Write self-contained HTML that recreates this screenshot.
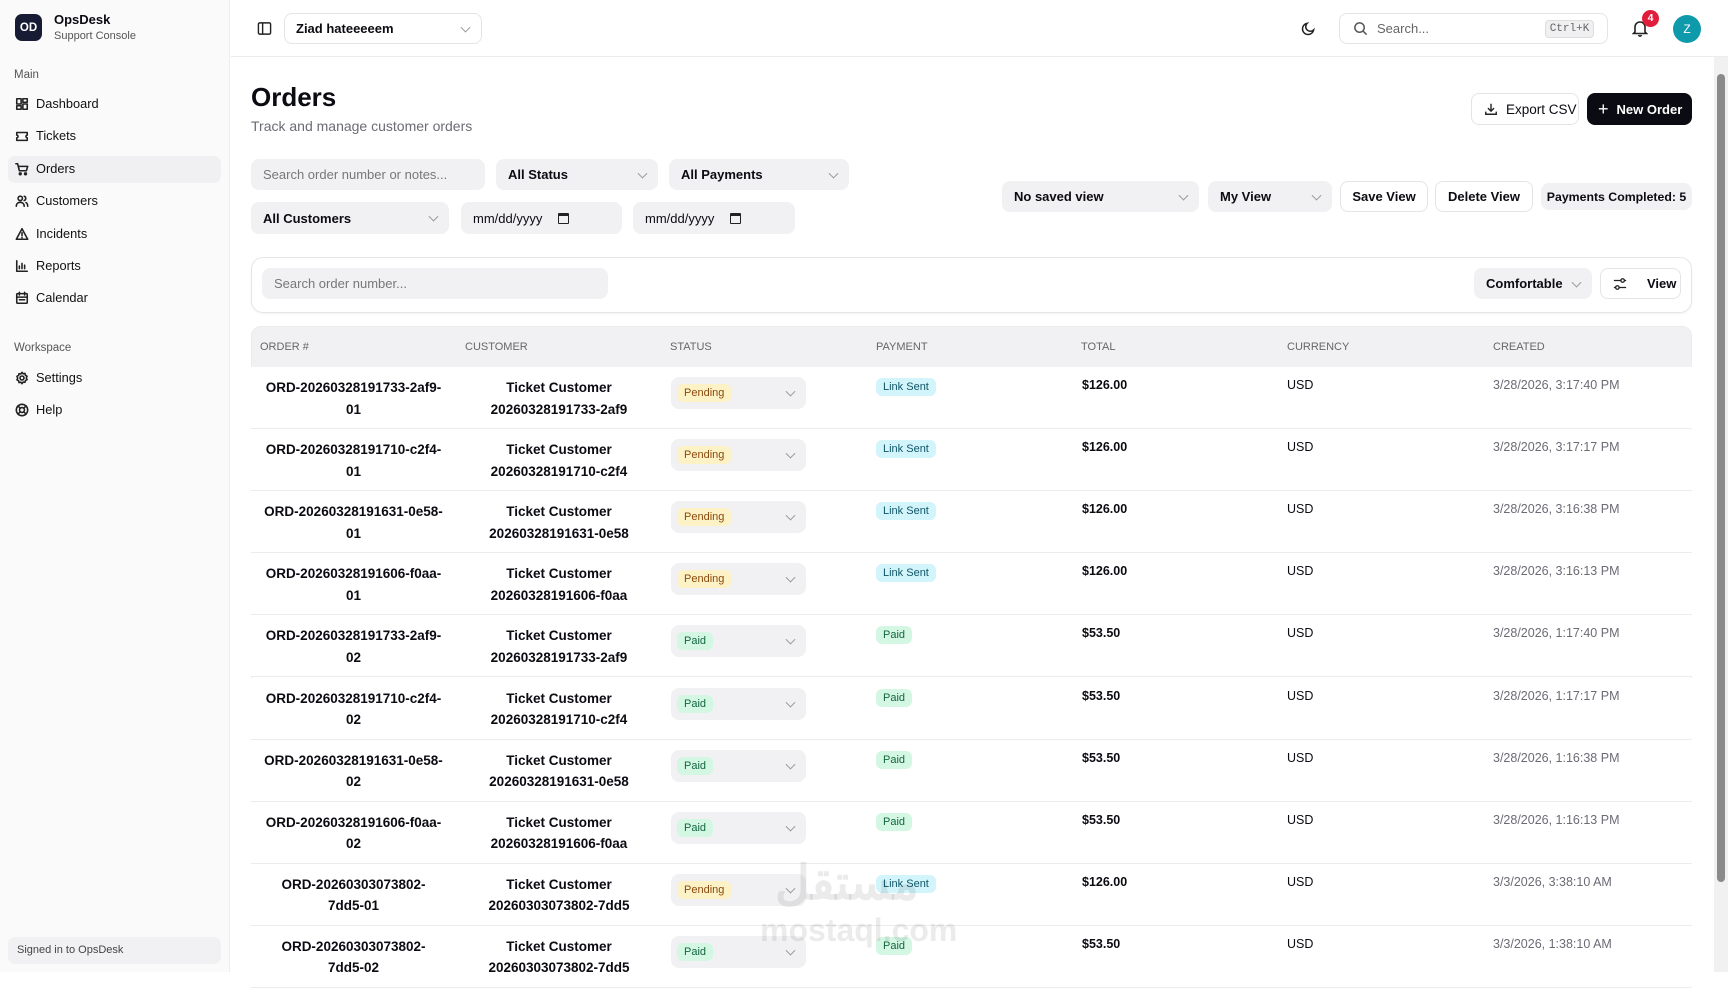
<!DOCTYPE html>
<html><head><meta charset="utf-8"><style>
*{box-sizing:border-box;margin:0;padding:0}
body{width:1728px;height:972px;overflow:hidden;font-family:"Liberation Sans",sans-serif;background:#fff;color:#0b0b12;position:relative;font-size:14px}
.abs{position:absolute}
.sb{left:0;top:0;width:230px;height:972px;background:#fafafa;border-right:1px solid #eee}
.nav{position:absolute;left:15px;font-size:12.8px;color:#111;display:flex;align-items:center;gap:7px}
.nav svg{width:14px;height:14px;fill:none;stroke:#222;stroke-width:1.8;stroke-linecap:round;stroke-linejoin:round}
.sec{position:absolute;left:14px;font-size:11.5px;color:#555}
.box{position:absolute;border-radius:8px;display:flex;align-items:center;font-size:13px}
.gray{background:#f1f1f3}
.out{background:#fff;border:1px solid #e4e4e7}
.chev{position:absolute;right:12px;top:50%;width:7px;height:7px;border-right:1.3px solid #999;border-bottom:1.3px solid #999;transform:translateY(-70%) rotate(45deg)}
.b{font-weight:bold}
.th{position:absolute;top:326px;height:41px;font-size:11px;color:#666;display:flex;align-items:center}
.row{position:absolute;left:251px;width:1441px;height:62px;border-bottom:1.5px solid #ececee;background:#fff}
.c{position:absolute;font-size:13.5px}
.badge{display:inline-block;border-radius:6px;font-size:11px;padding:3px 7px}
.pend{background:#fdf1c6;color:#8a4a0c}
.paid{background:#d3f7e3;color:#14663d}
.link{background:#d2f4fb;color:#0f5566}
</style></head><body>
<div class="abs sb"></div>
<div class="abs" style="left:15px;top:14px;width:27px;height:27px;border-radius:7px;background:#171b34;color:#fff;font-weight:bold;font-size:11.5px;display:flex;align-items:center;justify-content:center">OD</div>
<div class="abs b" style="left:54px;top:12px;font-size:13px">OpsDesk</div>
<div class="abs" style="left:54px;top:30px;font-size:11px;color:#555">Support Console</div>
<div class="sec" style="top:69px">Main</div>
<div class="abs" style="left:8px;top:156px;width:213px;height:27px;background:#f0f0f2;border-radius:7px"></div>
<div class="nav" style="top:96px"><svg viewBox="0 0 16 16"><rect x="2" y="2" width="5" height="6"/><rect x="9" y="2" width="5" height="4"/><rect x="2" y="10" width="5" height="4"/><rect x="9" y="8" width="5" height="6"/></svg>Dashboard</div>
<div class="nav" style="top:128px"><svg viewBox="0 0 16 16"><path d="M2 4h12v3a1.5 1.5 0 0 0 0 3v3H2v-3a1.5 1.5 0 0 0 0-3z"/></svg>Tickets</div>
<div class="nav" style="top:161px"><svg viewBox="0 0 16 16"><path d="M1 2h2l2 8h8l1.5-5H4"/><circle cx="6" cy="13.5" r="1"/><circle cx="12" cy="13.5" r="1"/></svg>Orders</div>
<div class="nav" style="top:193px"><svg viewBox="0 0 16 16"><circle cx="6" cy="5" r="2.5"/><path d="M1.5 14c0-3 2-4.5 4.5-4.5s4.5 1.5 4.5 4.5M10.5 2.6a2.5 2.5 0 0 1 0 4.8M12.5 9.8c1.3.6 2 2 2 4.2"/></svg>Customers</div>
<div class="nav" style="top:226px"><svg viewBox="0 0 16 16"><path d="M8 2L1.5 14h13z M8 6.5v3.5M8 12v.3"/></svg>Incidents</div>
<div class="nav" style="top:258px"><svg viewBox="0 0 16 16"><path d="M2 2v12h12M5 11V8M8 11V5M11 11V7"/></svg>Reports</div>
<div class="nav" style="top:290px"><svg viewBox="0 0 16 16"><rect x="2" y="3" width="12" height="11" rx="1"/><path d="M2 7h12M5 1.5v3M11 1.5v3M5 10h6"/></svg>Calendar</div>
<div class="sec" style="top:342px">Workspace</div>
<div class="nav" style="top:370px"><svg viewBox="0 0 16 16"><circle cx="8" cy="8" r="2.3"/><path d="M8 1.5l1.3 1.7 2.1-.4.5 2.1 1.9 1-.9 2 .9 2-1.9 1-.5 2.1-2.1-.4L8 14.5l-1.3-1.7-2.1.4-.5-2.1-1.9-1 .9-2-.9-2 1.9-1 .5-2.1 2.1.4z"/></svg>Settings</div>
<div class="nav" style="top:402px"><svg viewBox="0 0 16 16"><circle cx="8" cy="8" r="6.5"/><circle cx="8" cy="8" r="2.8"/><path d="M3.4 3.4l2.6 2.6M12.6 3.4L10 6M3.4 12.6L6 10M12.6 12.6L10 10"/></svg>Help</div>
<div class="abs" style="left:8px;top:937px;width:213px;height:27px;background:#f1f1f3;border-radius:7px;font-size:11px;color:#444;padding:7px 9px">Signed in to OpsDesk</div>

<!-- header -->
<div class="abs" style="left:231px;top:56px;width:1497px;height:1px;background:#ececee"></div>
<svg class="abs" style="left:257px;top:21px" width="15" height="15" viewBox="0 0 16 16" fill="none" stroke="#222" stroke-width="1.5"><rect x="1.5" y="2" width="13" height="12" rx="1.5"/><path d="M6 2v12"/></svg>
<div class="box out b" style="left:284px;top:13px;width:198px;height:31px;padding-left:11px">Ziad hateeeeem<span class="chev"></span></div>
<svg class="abs" style="left:1301px;top:21px" width="15" height="15" viewBox="0 0 16 16" fill="none" stroke="#222" stroke-width="1.6"><path d="M13.5 9.5A6 6 0 1 1 6.5 2.5a4.7 4.7 0 0 0 7 7z"/></svg>
<div class="box out" style="left:1339px;top:13px;width:269px;height:31px;padding-left:37px;color:#666">Search...</div>
<svg class="abs" style="left:1353px;top:21px" width="15" height="15" viewBox="0 0 16 16" fill="none" stroke="#555" stroke-width="1.6"><circle cx="7" cy="7" r="5"/><path d="M11 11l3.5 3.5"/></svg>
<div class="abs" style="left:1545px;top:20px;width:49px;height:18px;background:#f0f0f2;border:1px solid #ddd;border-radius:4px;font-family:'Liberation Mono',monospace;font-size:11px;color:#666;text-align:center;line-height:16px">Ctrl+K</div>
<svg class="abs" style="left:1632px;top:20px" width="16" height="17" viewBox="0 0 16 17" fill="none" stroke="#222" stroke-width="1.6"><path d="M3 12V7a5 5 0 0 1 10 0v5l1.5 1.5h-13zM6.5 15a1.6 1.6 0 0 0 3 0"/></svg>
<div class="abs" style="left:1642px;top:10px;width:17px;height:17px;border-radius:50%;background:#e11d3c;color:#fff;font-size:10.5px;font-weight:bold;text-align:center;line-height:17px">4</div>
<div class="abs" style="left:1673px;top:15px;width:28px;height:28px;border-radius:50%;background:#0e9aab;color:#fff;font-size:12px;text-align:center;line-height:28px">Z</div>

<!-- title -->
<div class="abs b" style="left:251px;top:82px;font-size:26px">Orders</div>
<div class="abs" style="left:251px;top:118px;font-size:14px;color:#6b6b75">Track and manage customer orders</div>
<div class="box out" style="left:1471px;top:93px;width:108px;height:32px;padding-left:12px;gap:8px;font-size:13.5px"><svg width="14" height="14" viewBox="0 0 16 16" fill="none" stroke="#222" stroke-width="1.6"><path d="M8 2v8M4.5 7L8 10.5 11.5 7M2 11v3h12v-3"/></svg>Export CSV</div>
<div class="box b" style="left:1587px;top:93px;width:105px;height:32px;background:#0b0b14;color:#fff;padding-left:11px;gap:8px;font-size:13px"><span style="font-size:18px;font-weight:normal">+</span>New Order</div>

<!-- filters -->
<div class="box gray" style="left:251px;top:159px;width:234px;height:31px;padding-left:12px;color:#777">Search order number or notes...</div>
<div class="box gray b" style="left:496px;top:159px;width:162px;height:31px;padding-left:12px">All Status<span class="chev"></span></div>
<div class="box gray b" style="left:669px;top:159px;width:180px;height:31px;padding-left:12px">All Payments<span class="chev"></span></div>
<div class="box gray b" style="left:251px;top:202px;width:198px;height:32px;padding-left:12px">All Customers<span class="chev"></span></div>
<div class="box gray" style="left:461px;top:202px;width:161px;height:32px;padding-left:12px;gap:16px">mm/dd/yyyy <span style="display:inline-block;width:11px;height:11px;border:1.5px solid #222;border-top-width:3px;border-radius:1px"></span></div>
<div class="box gray" style="left:633px;top:202px;width:162px;height:32px;padding-left:12px;gap:16px">mm/dd/yyyy <span style="display:inline-block;width:11px;height:11px;border:1.5px solid #222;border-top-width:3px;border-radius:1px"></span></div>
<div class="box gray b" style="left:1002px;top:181px;width:197px;height:31px;padding-left:12px">No saved view<span class="chev"></span></div>
<div class="box gray b" style="left:1208px;top:181px;width:124px;height:31px;padding-left:12px">My View<span class="chev"></span></div>
<div class="box out b" style="left:1340px;top:181px;width:88px;height:31px;justify-content:center">Save View</div>
<div class="box out b" style="left:1435px;top:181px;width:98px;height:31px;justify-content:center">Delete View</div>
<div class="box gray b" style="left:1541px;top:183px;width:151px;height:27px;justify-content:center;font-size:12.3px">Payments Completed: 5</div>

<!-- toolbar card -->
<div class="abs" style="left:251px;top:257px;width:1441px;height:56px;border:1.5px solid #e6e6e9;border-radius:12px;box-shadow:0 1px 2px rgba(0,0,0,.05)"></div>
<div class="box gray" style="left:262px;top:268px;width:346px;height:31px;padding-left:12px;color:#777">Search order number...</div>
<div class="box gray b" style="left:1474px;top:268px;width:118px;height:31px;padding-left:12px">Comfortable<span class="chev"></span></div>
<div class="box out b" style="left:1600px;top:268px;width:81px;height:31px;padding-left:12px;gap:20px"><svg width="14" height="14" viewBox="0 0 16 16" fill="none" stroke="#222" stroke-width="1.5"><path d="M1 4h8M13 4h2M1 12h2M7 12h8"/><circle cx="11" cy="4" r="2"/><circle cx="5" cy="12" r="2"/></svg>View</div>

<!-- table -->
<div class="abs" style="left:251px;top:326px;width:1441px;height:42px;background:#f1f1f3;border-radius:10px 10px 0 0"></div>
<div class="abs" style="left:251px;top:326px;width:1441px;height:660px;border:1.5px solid #ececee;border-radius:10px 10px 0 0;border-bottom:none"></div>
<div class="th" style="left:260px">ORDER #</div>
<div class="th" style="left:465px">CUSTOMER</div>
<div class="th" style="left:670px">STATUS</div>
<div class="th" style="left:876px">PAYMENT</div>
<div class="th" style="left:1081px">TOTAL</div>
<div class="th" style="left:1287px">CURRENCY</div>
<div class="th" style="left:1493px">CREATED</div>

<div id="rows"></div>
<script>
const d=[
["ORD-20260328191733-2af9-<br>01","20260328191733-2af9","Pending","Link Sent","$126.00","3/28/2026, 3:17:40 PM"],
["ORD-20260328191710-c2f4-<br>01","20260328191710-c2f4","Pending","Link Sent","$126.00","3/28/2026, 3:17:17 PM"],
["ORD-20260328191631-0e58-<br>01","20260328191631-0e58","Pending","Link Sent","$126.00","3/28/2026, 3:16:38 PM"],
["ORD-20260328191606-f0aa-<br>01","20260328191606-f0aa","Pending","Link Sent","$126.00","3/28/2026, 3:16:13 PM"],
["ORD-20260328191733-2af9-<br>02","20260328191733-2af9","Paid","Paid","$53.50","3/28/2026, 1:17:40 PM"],
["ORD-20260328191710-c2f4-<br>02","20260328191710-c2f4","Paid","Paid","$53.50","3/28/2026, 1:17:17 PM"],
["ORD-20260328191631-0e58-<br>02","20260328191631-0e58","Paid","Paid","$53.50","3/28/2026, 1:16:38 PM"],
["ORD-20260328191606-f0aa-<br>02","20260328191606-f0aa","Paid","Paid","$53.50","3/28/2026, 1:16:13 PM"],
["ORD-20260303073802-<br>7dd5-01","20260303073802-7dd5","Pending","Link Sent","$126.00","3/3/2026, 3:38:10 AM"],
["ORD-20260303073802-<br>7dd5-02","20260303073802-7dd5","Paid","Paid","$53.50","3/3/2026, 1:38:10 AM"]];
let h="";
d.forEach((r,i)=>{const t=367+i*62.1;
const sc=r[2]=="Paid"?"paid":"pend",pc=r[3]=="Paid"?"paid":"link";
h+=`<div class="row" style="top:${t}px">
<div class="c b" style="left:0;width:205px;top:10px;text-align:center;line-height:21.5px">${r[0]}</div>
<div class="c b" style="left:205px;width:206px;top:10px;text-align:center;line-height:21.5px">Ticket Customer<br>${r[1]}</div>
<div class="box gray" style="left:420px;top:10px;width:135px;height:32px;padding-left:6px"><span class="badge ${sc}">${r[2]}</span><span class="chev"></span></div>
<div class="c" style="left:625px;top:11px"><span class="badge ${pc}">${r[3]}</span></div>
<div class="c b" style="left:831px;top:11px;font-size:12.5px">${r[4]}</div>
<div class="c" style="left:1036px;top:11px;font-size:12.5px">USD</div>
<div class="c" style="left:1242px;top:11px;font-size:12.5px;color:#6b6b75">${r[5]}</div></div>`});
document.getElementById("rows").innerHTML=h;
</script>
<div class="abs" style="left:775px;top:855px;font-size:48px;color:rgba(0,0,0,.08);font-weight:bold">مستقل</div>
<div class="abs" style="left:760px;top:912px;font-size:32px;color:rgba(0,0,0,.08);font-weight:bold">mostaql.com</div>
<!-- scrollbar -->
<div class="abs" style="left:1714px;top:57px;width:14px;height:915px;background:#f1f1f1"></div>
<div class="abs" style="left:1717px;top:74px;width:8px;height:808px;background:#8a8a8a;border-radius:4px"></div>
</body></html>
